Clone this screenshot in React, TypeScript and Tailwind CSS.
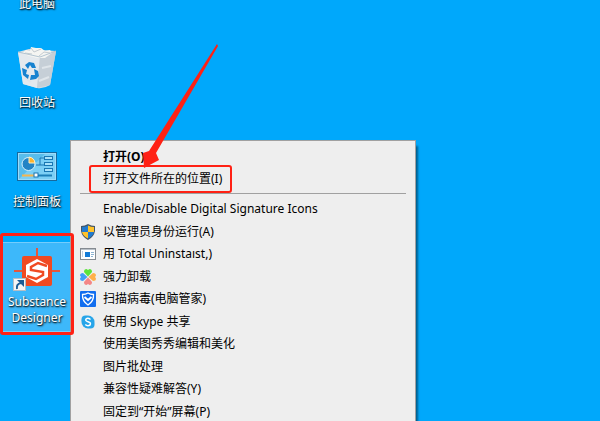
import type { ReactNode } from "react";

const uiFont = "font-['Noto_Sans','Noto_Sans_CJK_SC',sans-serif]";

function RecycleBinIcon() {
  return (
    <svg viewBox="0 0 40 48" className="h-12 w-10" aria-hidden="true">
      <path d="M1 8 L12 5 L39 7 L33 41 Q27 45 20 44 L6 40 Z" fill="#d5dce2" />
      <path d="M1 8 L23 13 L20 44 L6 40 Z" fill="#e4e9ee" />
      <path d="M23 13 L39 7 L33 41 L20 44 Z" fill="#c6cfd7" />
      <path d="M5 9 L9 6 L13 7 L14 3 L19 4 L24 4 L28 7 L33 6 L35 9 L28 14 L20 14 L12 12 Z" fill="#f5f5f2" />
      <path d="M14 4 L17 8 L24 5 M22 12 L27 8 L33 9 M8 9 L15 10" stroke="#c5cbd0" fill="none" />
      <path d="M8 34 L14 38 M22 37 L32 33 M25 24 L34 22" stroke="#dfe5ea" strokeWidth="2" fill="none" />
      <path d="M8 21 L12 18 L17 19 L19 24 L15 24 L13 21 L11 25 Z M5 24 L10 26 L9 30 L12 31 L11 35 L6 31 Z M17 25 L21 27 L22 32 L19 35 L13 36 L14 31 L18 31 Z" fill="#1682d0" />
      <path d="M1 8 L23 13 L39 7" stroke="#b3c5d2" fill="none" />
    </svg>
  );
}

function ControlPanelIcon() {
  return (
    <svg viewBox="0 0 40 30" className="h-[30px] w-10" aria-hidden="true">
      <rect x="0.5" y="0.5" width="39" height="28" fill="#9bdcfb" stroke="#17699d" />
      <rect x="2" y="2" width="36" height="25" fill="#58bdec" />
      <path d="M2 27 L28 2 H38 V27 Z" fill="#7bcff5" />
      <circle cx="11.5" cy="12" r="6.5" fill="#2384c5" stroke="#d9f1fc" />
      <path d="M12 11 V5 A7 7 0 0 1 18 11 Z" fill="#ffb42e" stroke="#fff0c6" />
      <path d="M19 13 H23 V6 H27 M23 13 H27" stroke="#1977b3" fill="none" />
      <g fill="#a9e2fb" stroke="#1977b3">
        <rect x="27.5" y="4.5" width="8" height="3" />
        <rect x="27.5" y="10.5" width="8" height="3" />
        <rect x="27.5" y="16.5" width="8" height="3" />
      </g>
      <path d="M5 23.5 H18" stroke="#f6b54d" strokeWidth="2" />
      <path d="M20 23.5 H35" stroke="#1c7fb8" strokeWidth="2" />
      <rect x="17" y="21" width="4" height="4" fill="#fff" stroke="#1977b3" />
    </svg>
  );
}

function SubstanceIcon() {
  return (
    <svg viewBox="0 0 48 48" className="size-12" aria-hidden="true">
      <path d="M24 5 V15 M1 28 H47" stroke="#e4573c" strokeWidth="2" />
      <rect x="9" y="13" width="30" height="30" rx="2" fill="#f04a22" />
      <path d="M24 16 L35 22 V34 L24 40 L13 34 V22 Z" fill="#fff" />
      <path d="M34 23 L25 20 L18 24 V27 L30 29 V32 L23 36 L14 33" fill="none" stroke="#f04a22" strokeWidth="2.5" />
      <rect x="0.5" y="35.5" width="12" height="12" fill="#f5f5f5" stroke="#b6bec5" />
      <path d="M4 46 Q3 41 8 40" fill="none" stroke="#1b5c96" strokeWidth="2" />
      <path d="M4 37 H11 V44 Z" fill="#1b5c96" />
    </svg>
  );
}

function ShieldIcon() {
  return (
    <svg viewBox="0 0 16 16" className="size-4" aria-hidden="true">
      <path d="M8 0 Q11 2 15 2 V7 Q14 13 8 16 Q2 13 1 7 V2 Q5 2 8 0Z" fill="#42566a" />
      <path d="M8 1.5 V8 H2 V3 Q5 3 8 1.5Z M8 8 H14 Q13 12 8 14.5Z" fill="#217bd0" />
      <path d="M8 1.5 Q11 3 14 3 V8 H8Z M2 8 H8 V14.5 Q3 12 2 8Z" fill="#ffc32b" />
    </svg>
  );
}

function UninstallIcon() {
  return (
    <svg viewBox="0 0 16 16" className="size-4" aria-hidden="true">
      <rect x="0.5" y="2.5" width="15" height="11" fill="#fff" stroke="#858b91" />
      <path d="M1 3.5 H15" stroke="#b9c0c7" />
      <rect x="5" y="6" width="5" height="5" fill="#137bd7" />
      <path d="M2.500 5 V11" stroke="#c2d4e3" />
      <path d="M11 6.5 H14 M11 8.5 H14 M11 10.5 H13" stroke="#8eb4d2" />
    </svg>
  );
}

function CloverIcon() {
  return (
    <svg viewBox="0 0 16 16" className="size-4" aria-hidden="true">
      <path d="M8 7.5 L4 3 Q4 0 6.500 0 L8 1 L9.500 0 Q12 0 12 3Z" fill="#5be33a" />
      <path d="M8.500 8 L13 4 Q16 4 16 6.500 L15 8 L16 9.500 Q16 12 13 12Z" fill="#ffb04a" />
      <path d="M8 8.500 L12 13 Q12 16 9.500 16 L8 15 L6.500 16 Q4 16 4 13Z" fill="#f48686" />
      <path d="M7.500 8 L3 12 Q0 12 0 9.500 L1 8 L0 6.500 Q0 4 3 4Z" fill="#409ff5" />
    </svg>
  );
}

function GuardIcon() {
  return (
    <svg viewBox="0 0 16 16" className="size-4" aria-hidden="true">
      <rect width="16" height="16" rx="1" fill="#126eef" />
      <path d="M8 2 Q10.5 3.500 13.500 3.500 Q14 10 8 14 Q2 10 2.500 3.500 Q5.500 3.500 8 2Z" fill="none" stroke="#fff" strokeWidth="1.300" />
      <path d="M4.500 6 L8 9 L11.500 6" fill="none" stroke="#fff" strokeWidth="2" />
    </svg>
  );
}

function SkypeIcon() {
  return (
    <svg viewBox="0 0 16 16" className="size-4" aria-hidden="true">
      <circle cx="8" cy="8" r="6.500" fill="#27a5e9" />
      <circle cx="5.500" cy="5.500" r="4" fill="#27a5e9" />
      <circle cx="10.500" cy="10.500" r="4" fill="#27a5e9" />
      <path d="M10.500 5.500 Q8 3.500 6 5 Q5 7 8 7.700 Q11.500 8.500 10 11 Q7.500 12.500 5.300 10.500" fill="none" stroke="#fff" strokeWidth="1.500" />
    </svg>
  );
}

function DesktopItem({ icon, children, selected = false }: { icon?: ReactNode; children: ReactNode; selected?: boolean }) {
  return (
    <button
      type="button"
      className={`flex w-full flex-col items-center gap-[3px] text-xs leading-4 text-white [text-shadow:1px_1px_2px_#000,0_1px_1px_#0008] ${selected ? "h-[90px] border-y border-[#74cdfc] bg-[#3db8fa]" : "h-[99px]"}`}
    >
      <span className="flex h-12 shrink-0 items-center justify-center">{icon}</span>
      <span>{children}</span>
    </button>
  );
}

type Command = { label: string; icon?: ReactNode };

const commands: Command[] = [
  { label: "Enable/Disable Digital Signature Icons" },
  { label: "以管理员身份运行(A)", icon: <ShieldIcon /> },
  { label: "用 Total Uninstaıst,)", icon: <UninstallIcon /> },
  { label: "强力卸载", icon: <CloverIcon /> },
  { label: "扫描病毒(电脑管家)", icon: <GuardIcon /> },
  { label: "使用 Skype 共享", icon: <SkypeIcon /> },
  { label: "使用美图秀秀编辑和美化" },
  { label: "图片批处理" },
  { label: "兼容性疑难解答(Y)" },
  { label: "固定到“开始”屏幕(P)" },
];

function MenuItem({ label, icon, strong = false, marked = false }: Command & { strong?: boolean; marked?: boolean }) {
  return (
    <button
      type="button"
      role="menuitem"
      className={`relative flex w-full items-center gap-[7px] pl-[9px] text-left text-xs leading-[22px] whitespace-nowrap ${strong ? "font-bold" : ""}`}
    >
      <span className="flex w-4 shrink-0">{icon}</span>
      <span>{label}</span>
      {marked && <span className="absolute -top-[3px] left-[18px] h-7 w-[143px] rounded-[3px] border-2 border-[#ff2114]" />}
    </button>
  );
}

export default function App() {
  return (
    <main className={`relative h-screen overflow-hidden bg-[#00a8fb] ${uiFont}`}>
      <nav aria-label="Desktop" className="-mt-[55px] w-[74px]">
        <DesktopItem>此电脑</DesktopItem>
        <DesktopItem icon={<RecycleBinIcon />}>回收站</DesktopItem>
        <DesktopItem icon={<ControlPanelIcon />}>控制面板</DesktopItem>
        <DesktopItem icon={<SubstanceIcon />} selected>
          Substance
          <br />
          Designer
        </DesktopItem>
      </nav>

      <div
        role="menu"
        className="absolute top-[140px] left-[70px] w-[346px] border border-[#a0a0a0] bg-[#eee] pt-[5px] text-black shadow-[3px_5px_2px_-1px_#00608f]"
      >
        <MenuItem label="打开(O)" strong />
        <MenuItem label="打开文件所在的位置(I)" marked />
        <hr className="mx-[9px] mt-[3px] mb-1 border-[#a0a0a0]" />
        <div className="grid h-[225px] auto-rows-fr">
          {commands.map((command) => (
            <MenuItem key={command.label} {...command} />
          ))}
        </div>
      </div>

      <div className="pointer-events-none absolute top-[233px] left-0 h-[102px] w-[74px] rounded-[3px] border-[3px] border-[#ff2114]" />
      <svg viewBox="0 0 76 124" className="pointer-events-none absolute top-11 left-[142px] h-[124px] w-[76px]" aria-hidden="true">
        <path d="M75 0 L76 2 L14 109 L17 116 L2 124 L1 109 L7 107 Z" fill="#ff2114" />
      </svg>
    </main>
  );
}
